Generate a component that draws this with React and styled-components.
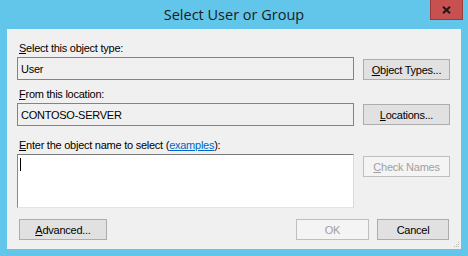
import styled, { createGlobalStyle } from "styled-components";

const GlobalStyle = createGlobalStyle`
  html, body {
    margin: 0;
    padding: 0;
    background: #62c6ea;
  }
  * { box-sizing: border-box; }
`;

const Window = styled.div`
  width: 468px;
  height: 256px;
  background: #62c6ea;
  display: flex;
  flex-direction: column;
  font-family: "Liberation Sans", Arial, sans-serif;
  font-size: 11px;
  letter-spacing: -0.25px;
  color: #000;
`;

const TitleBar = styled.div`
  height: 29px;
  display: flex;
  align-items: flex-start;
  padding-left: 38px;
  padding-right: 5px;
  letter-spacing: 0;
`;

const Title = styled.div`
  flex: 1;
  text-align: center;
  font-family: "Open Sans", "Noto Sans", sans-serif;
  font-size: 14.5px;
  line-height: 29px;
  color: #1b1b1b;
`;

const CloseButton = styled.div`
  width: 33px;
  height: 20px;
  background: #c75050;
  border: 1px solid #9c3a3a;
  border-top: none;
  display: flex;
  align-items: center;
  justify-content: center;
`;

const Client = styled.div`
  flex: 1;
  margin: 0 7px 7px 7px;
  background: #f0f0f0;
  padding: 13px 11px 9px 10px;
  display: flex;
  flex-direction: column;
  position: relative;
`;

const Label = styled.div`
  line-height: 13px;
  height: 13px;
  padding-left: 2px;
  margin-top: ${(p) => p.$top || 0}px;
  margin-bottom: 2px;
`;

const Key = styled.span`
  text-decoration: underline;
`;

const Link = styled.span`
  color: #0066cc;
  text-decoration: underline;
`;

const Row = styled.div`
  display: flex;
  align-items: flex-start;
  gap: 9px;
`;

const ReadBox = styled.div`
  flex: 1;
  height: 23px;
  border: 1px solid #838383;
  background: #f0f0f0;
  display: flex;
  align-items: center;
  padding-left: 3px;
`;

const NameBox = styled.div`
  flex: 1;
  height: 54px;
  background: #fff;
  border-top: 1px solid #7a7a7a;
  border-left: 1px solid #8a8a8a;
  border-right: 1px solid #d9d9d9;
  border-bottom: 1px solid #e3e3e3;
  padding: 3px 2px;
`;

const Caret = styled.div`
  width: 1px;
  height: 13px;
  background: #000;
`;

const Button = styled.div`
  width: ${(p) => p.$w || 87}px;
  height: 21px;
  margin-top: ${(p) => p.$mt || 0}px;
  display: flex;
  align-items: center;
  justify-content: center;
  background: ${(p) => (p.$disabled ? "#f4f4f4" : "#e1e1e1")};
  border: 1px solid ${(p) => (p.$disabled ? "#bfbfbf" : "#adadad")};
  color: ${(p) => (p.$disabled ? "#a0a0a0" : "#000")};
  flex-shrink: 0;
`;

const Footer = styled.div`
  margin-top: 11px;
  display: flex;
  align-items: center;
  padding-left: 2px;
  padding-right: 1px;
`;

const Spacer = styled.div`
  flex: 1;
`;

const ButtonGroup = styled.div`
  display: flex;
  gap: 8px;
`;

const Grip = styled.svg`
  position: absolute;
  right: 1px;
  bottom: 1px;
`;

export default function App() {
  return (
    <>
      <GlobalStyle />
      <Window>
        <TitleBar>
          <Title>Select User or Group</Title>
          <CloseButton>
            <svg width="9" height="8" viewBox="0 0 9 8">
              <path d="M1 0.8 L8 7.2 M8 0.8 L1 7.2" stroke="#1a1a1a" strokeWidth="2" />
            </svg>
          </CloseButton>
        </TitleBar>
        <Client>
          <Label>
            <Key>S</Key>elect this object type:
          </Label>
          <Row>
            <ReadBox>User</ReadBox>
            <Button $mt={2}>
              <span>
                <Key>O</Key>bject Types...
              </span>
            </Button>
          </Row>
          <Label $top={8}>
            <Key>F</Key>rom this location:
          </Label>
          <Row>
            <ReadBox>CONTOSO-SERVER</ReadBox>
            <Button $mt={1}>
              <span>
                <Key>L</Key>ocations...
              </span>
            </Button>
          </Row>
          <Label $top={13}>
            <Key>E</Key>nter the object name to select (<Link>examples</Link>):
          </Label>
          <Row>
            <NameBox>
              <Caret />
            </NameBox>
            <Button $mt={2} $disabled>
              <span>
                <Key>C</Key>heck Names
              </span>
            </Button>
          </Row>
          <Footer>
            <Button $w={88}>
              <span>
                <Key>A</Key>dvanced...
              </span>
            </Button>
            <Spacer />
            <ButtonGroup>
              <Button $w={73} $disabled>OK</Button>
              <Button $w={72}>Cancel</Button>
            </ButtonGroup>
          </Footer>
          <Grip width="8" height="8" viewBox="0 0 8 8">
            <rect x="6" y="2" width="1" height="1" fill="#b8b8b8" />
            <rect x="4" y="4" width="1" height="1" fill="#b8b8b8" />
            <rect x="6" y="4" width="1" height="1" fill="#b8b8b8" />
            <rect x="2" y="6" width="1" height="1" fill="#b8b8b8" />
            <rect x="4" y="6" width="1" height="1" fill="#b8b8b8" />
            <rect x="6" y="6" width="1" height="1" fill="#b8b8b8" />
          </Grip>
        </Client>
      </Window>
    </>
  );
}
